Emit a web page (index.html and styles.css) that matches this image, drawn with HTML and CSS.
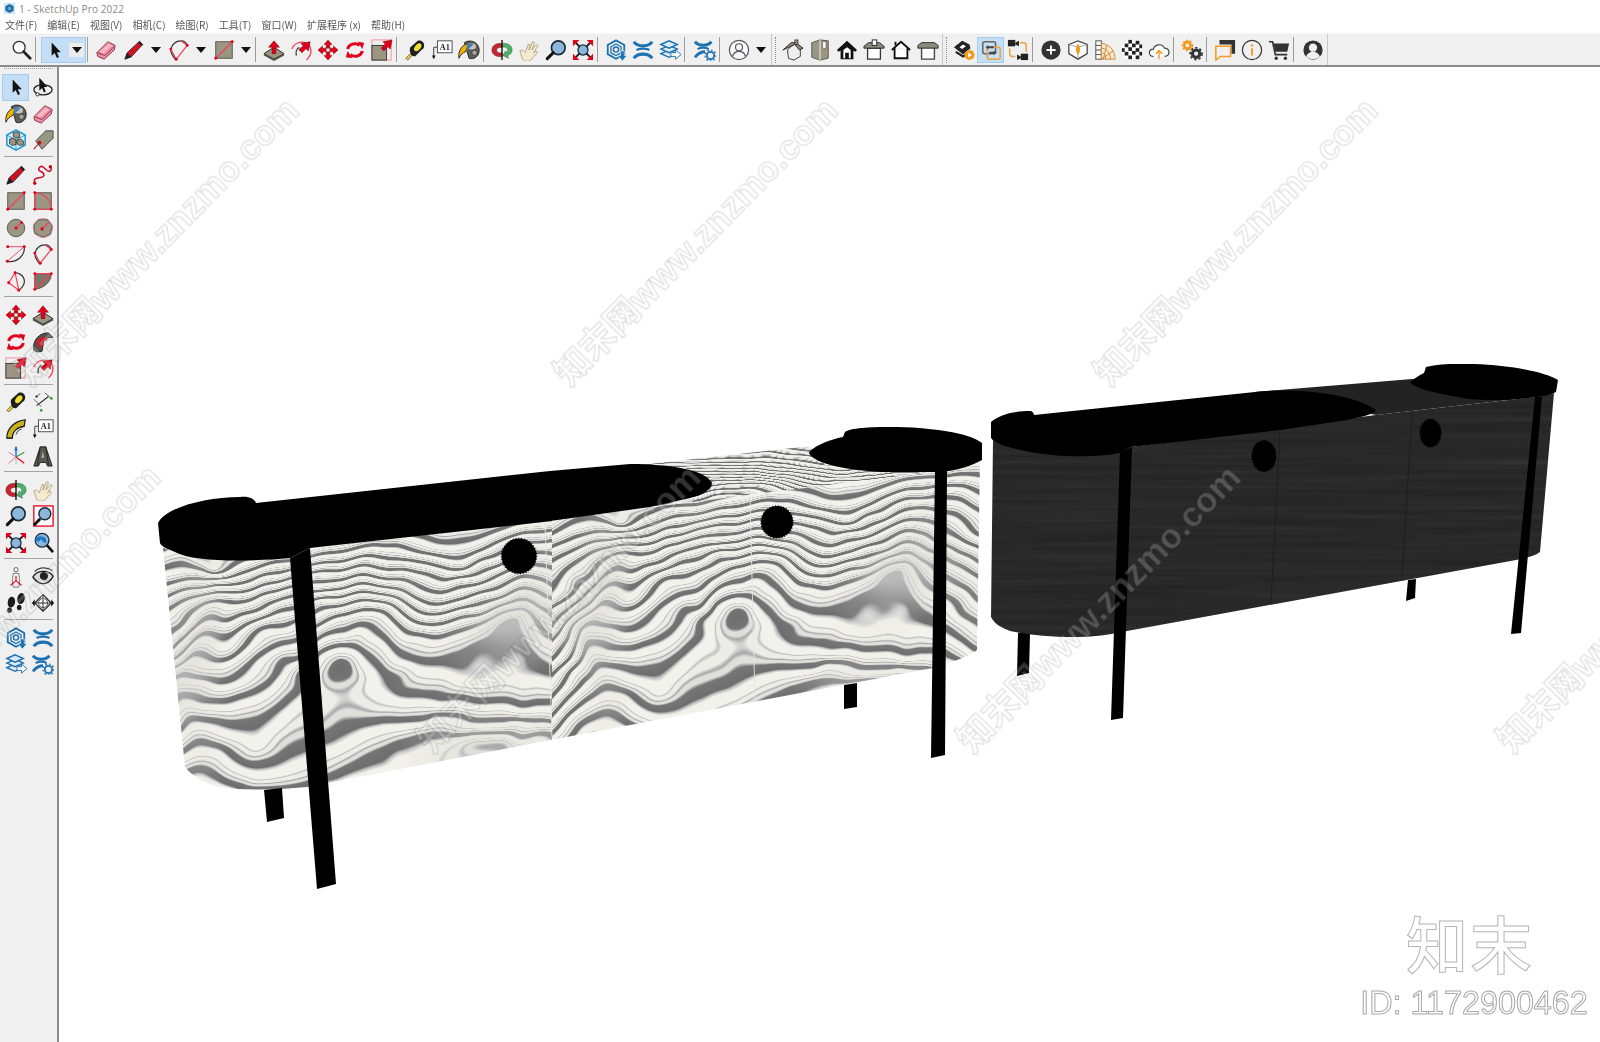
FILE: index.html
```html
<!DOCTYPE html>
<html lang="zh">
<head>
<meta charset="utf-8">
<title>1 - SketchUp Pro 2022</title>
<link rel="stylesheet" href="styles.css">
</head>
<body>
<svg class="defs" width="0" height="0" aria-hidden="true">
<defs>
<symbol id="select" viewBox="0 0 24 24"><path d="M8 3v16l3.600-3.400 2.700 6 2.500-1.100-2.700-5.900H19z" fill="#111"/></symbol>
<symbol id="lasso" viewBox="0 0 24 24"><ellipse cx="12" cy="15" rx="10" ry="5.500" fill="none" stroke="#222" stroke-width="1.400"/><circle cx="6" cy="20" r="1.800" fill="#fff" stroke="#222"/><path d="M8 2v14l3-3 2 5 2-1-2-5h4z" fill="#111"/></symbol>
<symbol id="loupe" viewBox="0 0 24 24"><circle cx="10" cy="9" r="6.500" fill="#fff" stroke="#333" stroke-width="1.400"/><path d="M15 14l7 7" stroke="#222" stroke-width="3" stroke-linecap="round"/></symbol>
<symbol id="eraser" viewBox="0 0 24 24"><path d="M2 15L14 3l8 4-1 5L10 22l-7-3z" fill="#f18ba2" stroke="#7e3645"/><path d="M3 15l8 3L21 8" fill="none" stroke="#7e3645"/><path d="M5 14L15 5l4 2L9 16z" fill="#f9b6c4"/></symbol>
<symbol id="pencil" viewBox="0 0 24 24"><path d="M2 22l2.500-7L18 2.500l3.500 3.500L9 19.500z" fill="#d3121f" stroke="#333"/><path d="M2 22l2.500-7 4.500 4.500z" fill="#222"/><path d="M16.500 4l3.500 3.500 1.500-1.500L18 2.500z" fill="#222"/></symbol>
<symbol id="free" viewBox="0 0 24 24"><path d="M3 20c-3-7 10-3 10-8S5 9 8 4s8 5 11 4 2-4 1-5" fill="none" stroke="#c5162e" stroke-width="1.700"/><circle cx="3" cy="21" r="1.800" fill="#d2001a"/><circle cx="20" cy="3" r="1.800" fill="#d2001a"/></symbol>
<symbol id="rect" viewBox="0 0 24 24"><rect x="3" y="3" width="18" height="18" fill="#9b9682" stroke="#55524a"/><path d="M3 21L21 3" stroke="#f2405a" stroke-width="1.400"/><circle cx="3" cy="21" r="1.600" fill="#e2001a"/><circle cx="21" cy="3" r="1.600" fill="#e2001a"/></symbol>
<symbol id="rrect" viewBox="0 0 24 24"><rect x="3" y="3" width="18" height="18" fill="#9b9682" stroke="#55524a"/><path d="M3 3v18h18C21 11 14 4 3 3z" fill="none" stroke="#f2405a" stroke-width="1.300"/><circle cx="3" cy="3" r="1.600" fill="#e2001a"/><circle cx="3" cy="21" r="1.600" fill="#e2001a"/><circle cx="21" cy="21" r="1.600" fill="#e2001a"/></symbol>
<symbol id="circle" viewBox="0 0 24 24"><circle cx="12" cy="12" r="9.500" fill="#9b9682" stroke="#55524a"/><path d="M12 12l6-6" stroke="#f2405a" stroke-width="1.400"/><circle cx="12" cy="12" r="1.700" fill="#e2001a"/><circle cx="18" cy="6" r="1.400" fill="#e2001a"/></symbol>
<symbol id="poly" viewBox="0 0 24 24"><circle cx="12" cy="12" r="10.500" fill="none" stroke="#f28a9a"/><path d="M7 3h10l5 7-2 9-8 3-9-4-1-9z" fill="#9b9682" stroke="#55524a"/><path d="M11 13l7-7" stroke="#f2405a" stroke-width="1.400"/><circle cx="11" cy="13" r="1.700" fill="#e2001a"/></symbol>
<symbol id="arc2" viewBox="0 0 24 24"><path d="M21 4c1 9-7 18-19 16" fill="none" stroke="#333" stroke-width="1.300"/><path d="M3 4h18L2.500 20" fill="none" stroke="#f2405a"/><circle cx="2.500" cy="20" r="1.600" fill="#e2001a"/><circle cx="21" cy="4" r="1.600" fill="#e2001a"/><circle cx="3" cy="4" r="1.600" fill="#e2001a"/></symbol>
<symbol id="pie" viewBox="0 0 24 24"><path d="M3 11C5 5 9 2 14 2c3 0 6 2 7 5" fill="none" stroke="#333" stroke-width="1.400"/><path d="M3 11c0 5 3 9 6 12" fill="none" stroke="#333" stroke-width="1.400"/><path d="M3 11l6 11L21 7 14 2" fill="none" stroke="#f2405a" stroke-width="1.300"/><circle cx="3" cy="11" r="1.500" fill="#e2001a"/><circle cx="21" cy="7" r="1.600" fill="#e2001a"/><circle cx="9" cy="22" r="1.600" fill="#e2001a"/></symbol>
<symbol id="arc3" viewBox="0 0 24 24"><path d="M11 3C17 3 22 8 21 14c-1 4-3 6-6 8" fill="none" stroke="#333" stroke-width="1.300"/><path d="M11 3L4 14l11 8z" fill="none" stroke="#f2405a" stroke-width="1.300"/><circle cx="11" cy="3" r="1.600" fill="#e2001a"/><circle cx="4" cy="14" r="1.600" fill="#e2001a"/><circle cx="15" cy="22" r="1.600" fill="#e2001a"/></symbol>
<symbol id="pie2" viewBox="0 0 24 24"><path d="M3 4h18c0 9-8 16-18 17z" fill="#7a7668" stroke="#55524a"/><path d="M3 4h18L3 21z" fill="none" stroke="#f2405a" stroke-width="1.300"/><circle cx="3" cy="4" r="1.500" fill="#e2001a"/><circle cx="21" cy="4" r="1.500" fill="#e2001a"/><circle cx="3" cy="21" r="1.500" fill="#e2001a"/></symbol>
<symbol id="push" viewBox="0 0 24 24"><path d="M1 16l11-7 11 7-11 6z" fill="#9b9682" stroke="#222"/><path d="M1 16v2l11 6 11-6v-2l-11 6z" fill="#55524a"/><path d="M12 2L6 9h4v7h4V9h4z" fill="#e2001a" stroke="#500" stroke-width=".5"/></symbol>
<symbol id="offset" viewBox="0 0 24 24"><path d="M2 11C5 3 16 1 21 7c3 5 2 11-3 16" fill="none" stroke="#f2405a" stroke-width="1.400"/><path d="M7 18c-1-3 0-7 3-9" fill="none" stroke="#333" stroke-width="1.400"/><path d="M22 3l-2 10-2.500-2.500L13 15l-3.500-3.500 5-4L12 5z" fill="#e2001a" stroke="#500" stroke-width=".5"/></symbol>
<symbol id="move" viewBox="0 0 24 24"><g fill="#e2001a" stroke="#500" stroke-width=".4"><path d="M12 1l4.500 5H14v4h-4V6H7.500z"/><path d="M12 23l4.500-5H14v-4h-4v4H7.500z"/><path d="M1 12l5-4.500V10h4v4H6v2.500z"/><path d="M23 12l-5-4.500V10h-4v4h4v2.500z"/></g></symbol>
<symbol id="rotate" viewBox="0 0 24 24"><g fill="none" stroke="#e2001a" stroke-width="3.200"><path d="M4 11c1-5 8-8 13-4"/><path d="M20 13c-1 5-8 8-13 4"/></g><path d="M15 3l7 1-2 7z" fill="#e2001a"/><path d="M9 21l-7-1 2-7z" fill="#e2001a"/></symbol>
<symbol id="follow" viewBox="0 0 24 24"><path d="M2 21C0 10 8 2 18 2l5 5c-7-1-11 3-11 9l-1 6-5 1z" fill="#55534c" stroke="#222"/><path d="M5 14c0-5 5-8 10-7l2 3-5 1-1 3 2 0-4 5-4-5z" fill="#d9182c"/></symbol>
<symbol id="scale" viewBox="0 0 24 24"><rect x="1" y="1" width="21" height="22" fill="none" stroke="#f28a9a"/><rect x="1" y="7" width="16" height="16" fill="#9b9682" stroke="#333"/><path d="M23 1l-2 10-2.500-2.500L14 13l-3-3 4.500-4.500L13 3z" fill="#e2001a" stroke="#500" stroke-width=".5"/></symbol>
<symbol id="tape" viewBox="0 0 24 24"><path d="M2 21l7-7 2 2-7 7z" fill="#e8d13a" stroke="#333" stroke-width=".7"/><path d="M7 9l8-7c3-1 7 1 7 5 0 2-1 4-3 5l-7 7c-2 0-5-1-5-4-1-2-1-4 0-6z" fill="#1e1e1e"/><ellipse cx="15" cy="9" rx="3" ry="5" transform="rotate(40 15 9)" fill="#efe12f"/></symbol>
<symbol id="dim" viewBox="0 0 24 24"><path d="M5 16L18 6" stroke="#222" stroke-width="1.100"/><path d="M2 9l8 8M14 2l8 7" stroke="#555"/><circle cx="5" cy="6" r="1.300" fill="#333"/><circle cx="21" cy="8" r="1.500" fill="#2e9c3a"/><circle cx="10" cy="21" r="1.500" fill="#2e9c3a"/><path d="M6 5l3-2" stroke="#555"/></symbol>
<symbol id="prot" viewBox="0 0 24 24"><path d="M2 22C2 11 11 3 22 2l-1 7C13 10 8 15 8 22z" fill="#c9b21c" stroke="#222" stroke-width="1.400"/><path d="M2 22l6 0M12 18c1-3 3-5 6-6" fill="none" stroke="#222"/></symbol>
<symbol id="text" viewBox="0 0 24 24"><rect x="7" y="2" width="16" height="13" fill="#fff" stroke="#444"/><text x="15" y="12" class="svg-a1">A1</text><path d="M3 9v11" stroke="#333"/><path d="M1 18h4l-2 4z" fill="#111"/><path d="M3 9h4" stroke="#333"/></symbol>
<symbol id="axes" viewBox="0 0 24 24"><path d="M12 13V2" stroke="#1c6fd0" stroke-width="1.500"/><path d="M12 1l-2 5h4z" fill="#1c6fd0"/><path d="M12 13l9-5" stroke="#2e9c3a" stroke-width="1.300"/><path d="M12 13l9 7" stroke="#e2001a" stroke-width="1.300"/><path d="M12 13l-8-5M12 13l-8 7" stroke="#d68" stroke-width="1"/><path d="M12 13v8" stroke="#9ac" stroke-width="1"/></symbol>
<symbol id="a3d" viewBox="0 0 24 24"><path d="M2 23L9 2h6l7 21-5 0-2-4H9l-2 4z" fill="#5b5950" stroke="#1e1e1e"/><path d="M10 14h3.500l-1.500-7z" fill="#aaa79a"/><path d="M9 2l-3 20M15 2l3 20" stroke="#222"/></symbol>
<symbol id="orbit" viewBox="0 0 24 24"><path d="M12 5C6 4 1 7 1 12s5 8 11 7v-4c-4 1-6-1-6-3s2-3 6-3z" fill="#c92232" stroke="#621" stroke-width=".6"/><path d="M12 5c6-1 11 2 11 7 0 3-2 5-5 6l1 3-6-3 3-5 1 2c1-1 2-2 1-4-1-2-3-3-6-2z" fill="#4fb06a" stroke="#263" stroke-width=".6"/><path d="M12 1v22" stroke="#111" stroke-width="1.500"/></symbol>
<symbol id="pan" viewBox="0 0 24 24"><path d="M2 13l3-1 3 3 3-9 2 0-1 6 4-9 2 1-3 8 5-6 2 1-5 8 3-2 1 2-6 7c-3 3-8 3-10 0z" fill="#f4ead0" stroke="#a3946f" stroke-width=".8"/></symbol>
<symbol id="zoom" viewBox="0 0 24 24"><circle cx="14.500" cy="9.500" r="7.500" fill="#8cb6dc" stroke="#1c2b3a" stroke-width="1.800"/><path d="M9 15l-6.500 6.500" stroke="#111" stroke-width="3.400" stroke-linecap="round"/></symbol>
<symbol id="zwin" viewBox="0 0 24 24"><rect x="2" y="1" width="21" height="22" fill="#fff" stroke="#e2001a" stroke-width="1.400"/><circle cx="14" cy="9.500" r="6.500" fill="#8cb6dc" stroke="#1c2b3a" stroke-width="1.600"/><path d="M9 15l-7 7" stroke="#111" stroke-width="3.200"/></symbol>
<symbol id="extents" viewBox="0 0 24 24"><path d="M3 3l18 18M21 3L3 21" stroke="#222" stroke-width="2"/><circle cx="12" cy="12" r="5.500" fill="#8cb6dc" stroke="#1c2b3a" stroke-width="1.400"/><g fill="#e2001a"><path d="M1 1h7L1 8z"/><path d="M23 1h-7l7 7z"/><path d="M1 23h7l-7-7z"/><path d="M23 23h-7l7-7z"/></g></symbol>
<symbol id="prev" viewBox="0 0 24 24"><circle cx="11" cy="9" r="7.500" fill="#8cb6dc" stroke="#1c2b3a" stroke-width="1.500"/><path d="M16 14l7 8" stroke="#111" stroke-width="3"/><path d="M3 10c1-6 8-7 12-3l1 5-4-1-2-3-2 2z" fill="#1c78c8"/></symbol>
<symbol id="walk" viewBox="0 0 24 24"><circle cx="12" cy="4" r="2.300" fill="#fff" stroke="#555"/><path d="M9 8h6l1 8-1 7h-6l-1-7z" fill="#eee" stroke="#777"/><path d="M6 21l6-5 6 5M12 16v-5" fill="none" stroke="#e2001a" stroke-width="1.200"/></symbol>
<symbol id="eye" viewBox="0 0 24 24"><path d="M1 12C5 5 17 3 23 11c-3 6-8 9-13 8-4-1-7-4-9-7z" fill="#ddd" stroke="#222" stroke-width="1.500"/><circle cx="13" cy="11" r="4.500" fill="#222"/><path d="M3 6C8 1 17 1 22 5" fill="none" stroke="#444" stroke-width="1.400"/></symbol>
<symbol id="feet" viewBox="0 0 24 24"><g fill="#1a1a1a"><ellipse cx="7" cy="11" rx="4" ry="6" transform="rotate(10 7 11)"/><ellipse cx="5" cy="20" rx="2.500" ry="3"/><ellipse cx="17.500" cy="7" rx="4" ry="6" transform="rotate(10 17 7)"/><ellipse cx="15.500" cy="17" rx="2.500" ry="3"/></g></symbol>
<symbol id="section" viewBox="0 0 24 24"><path d="M12 3l9 9-9 9-9-9z" fill="none" stroke="#222" stroke-width="1.300"/><circle cx="12" cy="12" r="5" fill="#fff" stroke="#444"/><path d="M1 12h22M12 3v18" stroke="#222"/><path d="M21 8l3 4-3 4zM3 8l-3 4 3 4z" fill="#111"/></symbol>
<symbol id="paint" viewBox="0 0 24 24"><path d="M7 4c6-4 15-1 16 7s-6 12-11 10z" fill="#5f5e54" stroke="#222"/><ellipse cx="15" cy="8" rx="4.500" ry="3.500" fill="#c8c6bb"/><circle cx="18" cy="15" r="2.800" fill="#a9a79c" stroke="#222" stroke-width=".6"/><path d="M1 21c-1-8 3-14 9-16 1 3 0 6-2 9-3 1-5 3-7 7z" fill="#f0b400" stroke="#222"/><path d="M10 5c4-1 6 0 7 1l-8 7z" fill="#4b7fb8"/></symbol>
<symbol id="comp" viewBox="0 0 24 24"><path d="M12 1l10 5.500v11L12 23 2 17.500v-11z" fill="#dfeef7" stroke="#1c9ad8" stroke-width="1.700"/><path d="M2 6.500L12 12l10-5.500M12 12v11" fill="none" stroke="#1c9ad8"/><g fill="#9b9682" stroke="#222" stroke-width=".8"><path d="M9 4l4-1 3 2v4l-4 1-3-2z"/><path d="M5 11l4-1 3 2v5l-4 1-3-2z"/><path d="M13 12l4-1 3 2v4l-4 1-3-2z"/></g></symbol>
<symbol id="tag" viewBox="0 0 24 24"><path d="M4 13L15 2h8v8L11 22z" fill="#9b9682" stroke="#444"/><circle cx="8" cy="15" r="1.800" fill="#e2001a" stroke="#600" stroke-width=".4"/><path d="M8 15l-6 7" stroke="#a22" stroke-width="1.200"/></symbol>
<symbol id="hex" viewBox="0 0 24 24"><g fill="none" stroke="#1c71b0"><path d="M12 1.500l9 5v10l-9 5-9-5v-10z" stroke-width="2"/><path d="M12 5.500l5.500 3v6.500L12 18l-5.500-3V8.500z" stroke-width="1.400"/><circle cx="12" cy="11.500" r="2.800" stroke-width="1.600"/></g><path d="M17 13h4v5h3l-5 6-5-6h3z" fill="#1c71b0" stroke="#f0f0f0" stroke-width=".7"/></symbol>
<symbol id="xw" viewBox="0 0 24 24"><g fill="none" stroke="#1c71b0" stroke-width="3.400"><path d="M2 3c4 6 16 6 20 0"/><path d="M2 21c4-6 16-6 20 0"/><path d="M5 12c3-2 11-2 14 0" stroke-width="2.600"/></g></symbol>
<symbol id="stack" viewBox="0 0 24 24"><g fill="#dceaf5" stroke="#1c71b0" stroke-width="1.500"><path d="M2 16l9-4 9 4-9 4z"/><path d="M2 11l9-4 9 4-9 4z"/><path d="M2 6l9-4 9 4-9 4z"/></g><path d="M13 15h5v-3l6 5-6 5v-3h-5z" fill="#fff" stroke="#1c71b0"/></symbol>
<symbol id="xgear" viewBox="0 0 24 24"><g fill="none" stroke="#1c71b0" stroke-width="3.200"><path d="M1 3c4 5 14 5 18 0"/><path d="M1 20c4-5 9-6 11-6"/><path d="M4 11c3-2 9-2 12 0" stroke-width="2.400"/></g><circle cx="18" cy="18" r="4" fill="#f0f0f0" stroke="#1c71b0" stroke-width="2"/><circle cx="18" cy="18" r="6" fill="none" stroke="#1c71b0" stroke-width="1.300" stroke-dasharray="2 2"/></symbol>
<symbol id="profile" viewBox="0 0 24 24"><circle cx="12" cy="12" r="10.500" fill="#f8f8f8" stroke="#55555f" stroke-width="1.300"/><circle cx="12" cy="9" r="3.800" fill="none" stroke="#55555f" stroke-width="1.300"/><path d="M5 19c1-4 4-5.500 7-5.500s6 1.500 7 5.500" fill="none" stroke="#55555f" stroke-width="1.300"/></symbol>
<symbol id="iso" viewBox="0 0 24 24"><path d="M6 12l1 9 6 2 7-4V10L14 4z" fill="#efefef" stroke="#333"/><path d="M1 12L10 4l5 0 8 6-4 2-5-6z" fill="#8d8a7b" stroke="#222"/><rect x="14" y="1" width="3.500" height="5" fill="#8d8a7b" stroke="#222" stroke-width=".7"/></symbol>
<symbol id="door" viewBox="0 0 24 24"><path d="M3 4l9-3 9 1v19l-9 2-9-3z" fill="#9b9682" stroke="#555"/><path d="M12 1v22" stroke="#f4f4f4"/><rect x="15" y="3" width="3.500" height="7" fill="#fff" stroke="#555" stroke-width=".6"/></symbol>
<symbol id="homeb" viewBox="0 0 24 24"><path d="M1 12L12 2l11 10-2 2-2-1.500V22H5V12.500L3 14z" fill="#111"/><path d="M8 21v-9l4-3 4 3v9h-2v-6h-4v6z" fill="#fff"/></symbol>
<symbol id="top" viewBox="0 0 24 24"><path d="M5 10h14v12H5z" fill="#fff" stroke="#333" stroke-width="1.400"/><path d="M1 10V8l5-4h12l5 4v2z" fill="#8d8a7b" stroke="#222"/><rect x="10" y="1" width="5" height="6" fill="#fff" stroke="#222"/></symbol>
<symbol id="outl" viewBox="0 0 24 24"><path d="M2 12L12 3l10 9M5 10v11h14V10" fill="#fff" stroke="#111" stroke-width="2"/><path d="M6 3v4" stroke="#111" stroke-width="2"/></symbol>
<symbol id="box" viewBox="0 0 24 24"><path d="M5 9h14v13H5z" fill="#fff" stroke="#444" stroke-width="1.500"/><path d="M1 10V7l4-3h14l4 3v3z" fill="#8d8a7b" stroke="#222"/></symbol>
<symbol id="lo" viewBox="0 0 24 24"><path d="M1 9l9-7 8 4 1 4-8 7z" fill="#222"/><path d="M3 14l8 5 3-2" fill="none" stroke="#222" stroke-width="2.400"/><path d="M7 9l4-3 3 2-4 3z" fill="#fff"/><circle cx="18" cy="17.500" r="5.500" fill="#f39a1e"/><path d="M16.500 14.500l4 3-4 3z" fill="#fff"/></symbol>
<symbol id="swap" viewBox="0 0 24 24"><rect x="3" y="3" width="14" height="13" rx="2" fill="none" stroke="#666" stroke-width="1.700"/><rect x="8" y="9" width="14" height="13" rx="2" fill="none" stroke="#f0a040" stroke-width="1.700"/><path d="M6 9l3-2.500v1.500h6v2H9v1.500zM18 15l-3-2.500V14H10v2h5v1.500z" fill="#444"/></symbol>
<symbol id="cams" viewBox="0 0 24 24"><rect x="1" y="1" width="8" height="7" fill="#222"/><path d="M9 4l4-2v6l-4-2z" fill="#222"/><rect x="15" y="16" width="8" height="7" fill="#222"/><path d="M15 19l-4-2v6l4-2z" fill="#222"/><path d="M14 4h4c2 0 3 1 3 3v7M3 10v6c0 2 1 3 3 3h3" fill="none" stroke="#f0a040" stroke-width="1.600"/></symbol>
<symbol id="plus" viewBox="0 0 24 24"><circle cx="12" cy="12" r="10.500" fill="#333"/><path d="M12 7v10M7 12h10" stroke="#fff" stroke-width="2"/></symbol>
<symbol id="shield" viewBox="0 0 24 24"><path d="M2 6l10-4 10 4v10l-10 6-10-6z" fill="#fff" stroke="#444" stroke-width="1.400"/><path d="M2 6l10 3 10-3M12 9v13" fill="none" stroke="#888" stroke-width=".8"/><path d="M12 5c3 4 3 9 0 12-3-3-3-8 0-12z" fill="#f39a1e"/></symbol>
<symbol id="colors" viewBox="0 0 24 24"><rect x="2" y="2" width="6" height="20" fill="#fff" stroke="#444"/><path d="M2 7h6M2 12h6M2 17h6" stroke="#444"/><path d="M8 5c8 0 15 7 15 17H8z" fill="#fbe7cf" stroke="#c9862f"/><path d="M8 10c5 0 10 5 10 12M8 15c3 0 5 3 5 7M14 7l-4 15M21 13L8 22" fill="none" stroke="#c9862f"/></symbol>
<symbol id="checker" viewBox="0 0 24 24"><circle cx="12" cy="12" r="11" fill="#fff"/><g fill="#222"><rect x="8" y="1" width="4" height="4"/><rect x="16" y="2" width="4" height="4"/><rect x="4" y="5" width="4" height="4"/><rect x="12" y="5" width="4" height="4"/><rect x="20" y="6" width="3" height="4"/><rect x="1" y="10" width="3" height="4"/><rect x="8" y="9" width="4" height="4"/><rect x="16" y="10" width="4" height="4"/><rect x="4" y="14" width="4" height="4"/><rect x="12" y="13" width="4" height="4"/><rect x="20" y="14" width="3" height="4"/><rect x="8" y="18" width="4" height="4"/><rect x="16" y="18" width="4" height="4"/></g></symbol>
<symbol id="cloud" viewBox="0 0 24 24"><path d="M6 19c-6 0-6-8 0-8 1-5 9-7 12-1 6 0 7 9 0 9" fill="#fff" stroke="#444" stroke-width="1.300"/><path d="M12 22v-9M8.500 16l3.500-3.500 3.500 3.500" fill="none" stroke="#f39a1e" stroke-width="1.500"/></symbol>
<symbol id="gears" viewBox="0 0 24 24"><circle cx="7" cy="7" r="3.500" fill="none" stroke="#f39a1e" stroke-width="3"/><circle cx="7" cy="7" r="5.500" fill="none" stroke="#f39a1e" stroke-width="1.600" stroke-dasharray="2 2"/><circle cx="16.500" cy="16" r="4" fill="none" stroke="#333" stroke-width="3.400"/><circle cx="16.500" cy="16" r="6.500" fill="none" stroke="#333" stroke-width="1.800" stroke-dasharray="2.500 2.300"/></symbol>
<symbol id="chat" viewBox="0 0 24 24"><path d="M6 1h17v15h-4V6H6z" fill="#333"/><path d="M2 8h16v11H7l-5 4z" fill="#f0f0f0" stroke="#f39a1e" stroke-width="1.600"/></symbol>
<symbol id="info" viewBox="0 0 24 24"><circle cx="12" cy="12" r="10.500" fill="none" stroke="#333" stroke-width="1.300"/><path d="M12 10v8" stroke="#f39a1e" stroke-width="2"/><circle cx="12" cy="7" r="1.300" fill="#f39a1e"/></symbol>
<symbol id="cart" viewBox="0 0 24 24"><path d="M1 3h4l3 14h13" fill="none" stroke="#333" stroke-width="1.800"/><path d="M6 5h17l-2 9H8z" fill="#333"/><circle cx="9" cy="21" r="1.800" fill="#333"/><circle cx="19" cy="21" r="1.800" fill="#333"/></symbol>
<symbol id="user" viewBox="0 0 24 24"><circle cx="12" cy="12" r="10.500" fill="#333"/><circle cx="12" cy="9.500" r="4.500" fill="#f0f0f0"/><path d="M4.500 19c2-4 5-5 7.500-5s5.500 1 7.500 5c-2 2-5 3-7.500 3s-5.500-1-7.500-3z" fill="#f0f0f0"/></symbol>
<symbol id="app" viewBox="0 0 24 24"><rect width="24" height="24" fill="#cfe3f3"/><path d="M12 2l9 5v10l-9 5-9-5V7z" fill="#1d6f9f"/><circle cx="12" cy="12" r="4" fill="#5fa8cf"/></symbol>

<filter id="wood" filterUnits="objectBoundingBox" x="0" y="0" width="1" height="1" color-interpolation-filters="sRGB">
<feTurbulence type="fractalNoise" baseFrequency="0.005 0.2" numOctaves="3" seed="7"/>
<feColorMatrix type="matrix" values="1 0 0 0 0 1 0 0 0 0 1 0 0 0 0 0 0 0 0 1"/>
<feComponentTransfer><feFuncR type="table" tableValues=".13 .14 .15 .16 .17 .19 .22"/><feFuncG type="table" tableValues=".13 .14 .15 .16 .17 .19 .22"/><feFuncB type="table" tableValues=".13 .14 .15 .16 .17 .19 .22"/></feComponentTransfer>
<feComposite in2="SourceAlpha" operator="in"/>
</filter>
</defs>
</svg>

<div class="app">
  <div class="titlebar"><svg class="app-icon"><use href="#app"/></svg><span class="title">1 - SketchUp Pro 2022</span></div>
  <nav class="menubar">
    <span class="menu-item">文件(F)</span>
    <span class="menu-item">编辑(E)</span>
    <span class="menu-item">视图(V)</span>
    <span class="menu-item">相机(C)</span>
    <span class="menu-item">绘图(R)</span>
    <span class="menu-item">工具(T)</span>
    <span class="menu-item">窗口(W)</span>
    <span class="menu-item">扩展程序 (x)</span>
    <span class="menu-item">帮助(H)</span>
  </nav>
  <div class="toolbar">
    <span class="btn"><svg class="ic"><use href="#loupe"/></svg></span>
    <i class="sep"></i>
    <span class="split on"><span class="btn"><svg class="ic ic-sm"><use href="#select"/></svg></span><span class="dd dd-box"></span></span>
    <i class="sep"></i>
    <span class="btn"><svg class="ic"><use href="#eraser"/></svg></span>
    <span class="btn btn-after"><svg class="ic"><use href="#pencil"/></svg></span><span class="dd"></span>
    <span class="btn"><svg class="ic"><use href="#pie"/></svg></span><span class="dd"></span>
    <span class="btn"><svg class="ic"><use href="#rect"/></svg></span><span class="dd dd-end"></span>
    <i class="sep"></i>
    <span class="btn"><svg class="ic"><use href="#push"/></svg></span>
    <span class="btn"><svg class="ic"><use href="#offset"/></svg></span>
    <span class="btn"><svg class="ic"><use href="#move"/></svg></span>
    <span class="btn"><svg class="ic"><use href="#rotate"/></svg></span>
    <span class="btn"><svg class="ic"><use href="#scale"/></svg></span>
    <i class="sep"></i>
    <span class="btn"><svg class="ic"><use href="#tape"/></svg></span>
    <span class="btn"><svg class="ic"><use href="#text"/></svg></span>
    <span class="btn"><svg class="ic"><use href="#paint"/></svg></span>
    <i class="sep"></i>
    <span class="btn"><svg class="ic"><use href="#orbit"/></svg></span>
    <span class="btn"><svg class="ic"><use href="#pan"/></svg></span>
    <span class="btn"><svg class="ic"><use href="#zoom"/></svg></span>
    <span class="btn"><svg class="ic"><use href="#extents"/></svg></span>
    <i class="sep"></i>
    <span class="btn"><svg class="ic"><use href="#hex"/></svg></span>
    <span class="btn"><svg class="ic"><use href="#xw"/></svg></span>
    <span class="btn"><svg class="ic"><use href="#stack"/></svg></span>
    <i class="sep"></i>
    <span class="btn btn-after-2"><svg class="ic"><use href="#xgear"/></svg></span>
    <i class="sep"></i>
    <span class="btn btn-after"><svg class="ic"><use href="#profile"/></svg></span><span class="dd"></span>
    <i class="sep sep-bar"></i><i class="grip"></i>
    <span class="btn"><svg class="ic"><use href="#iso"/></svg></span>
    <span class="btn"><svg class="ic"><use href="#door"/></svg></span>
    <span class="btn"><svg class="ic"><use href="#homeb"/></svg></span>
    <span class="btn"><svg class="ic"><use href="#top"/></svg></span>
    <span class="btn"><svg class="ic"><use href="#outl"/></svg></span>
    <span class="btn"><svg class="ic"><use href="#box"/></svg></span>
    <i class="sep sep-bar"></i><i class="grip"></i>
    <span class="btn"><svg class="ic"><use href="#lo"/></svg></span>
    <span class="btn on"><svg class="ic"><use href="#swap"/></svg></span>
    <span class="btn"><svg class="ic"><use href="#cams"/></svg></span>
    <i class="sep"></i>
    <span class="btn"><svg class="ic"><use href="#plus"/></svg></span>
    <span class="btn"><svg class="ic"><use href="#shield"/></svg></span>
    <span class="btn"><svg class="ic"><use href="#colors"/></svg></span>
    <span class="btn"><svg class="ic"><use href="#checker"/></svg></span>
    <span class="btn"><svg class="ic"><use href="#cloud"/></svg></span>
    <i class="sep"></i>
    <span class="btn"><svg class="ic"><use href="#gears"/></svg></span>
    <i class="sep"></i>
    <span class="btn"><svg class="ic"><use href="#chat"/></svg></span>
    <span class="btn"><svg class="ic"><use href="#info"/></svg></span>
    <span class="btn"><svg class="ic"><use href="#cart"/></svg></span>
    <i class="sep"></i>
    <span class="btn btn-after"><svg class="ic"><use href="#user"/></svg></span>
    <i class="sep sep-bar"></i>
  </div>

  <div class="workspace">
    <aside class="rail">
      <div class="rail-grip"></div>
      <div class="rail-group">
        <span class="rbtn on"><svg class="ic ic-sm"><use href="#select"/></svg></span><span class="rbtn"><svg class="ic"><use href="#lasso"/></svg></span>
        <span class="rbtn"><svg class="ic"><use href="#paint"/></svg></span><span class="rbtn"><svg class="ic"><use href="#eraser"/></svg></span>
        <span class="rbtn"><svg class="ic"><use href="#comp"/></svg></span><span class="rbtn"><svg class="ic"><use href="#tag"/></svg></span>
      </div>
      <hr class="rail-sep">
      <div class="rail-group">
        <span class="rbtn"><svg class="ic"><use href="#pencil"/></svg></span><span class="rbtn"><svg class="ic"><use href="#free"/></svg></span>
        <span class="rbtn"><svg class="ic"><use href="#rect"/></svg></span><span class="rbtn"><svg class="ic"><use href="#rrect"/></svg></span>
        <span class="rbtn"><svg class="ic"><use href="#circle"/></svg></span><span class="rbtn"><svg class="ic"><use href="#poly"/></svg></span>
        <span class="rbtn"><svg class="ic"><use href="#arc2"/></svg></span><span class="rbtn"><svg class="ic"><use href="#pie"/></svg></span>
        <span class="rbtn"><svg class="ic"><use href="#arc3"/></svg></span><span class="rbtn"><svg class="ic"><use href="#pie2"/></svg></span>
      </div>
      <hr class="rail-sep">
      <div class="rail-group">
        <span class="rbtn"><svg class="ic"><use href="#move"/></svg></span><span class="rbtn"><svg class="ic"><use href="#push"/></svg></span>
        <span class="rbtn"><svg class="ic"><use href="#rotate"/></svg></span><span class="rbtn"><svg class="ic"><use href="#follow"/></svg></span>
        <span class="rbtn"><svg class="ic"><use href="#scale"/></svg></span><span class="rbtn"><svg class="ic"><use href="#offset"/></svg></span>
      </div>
      <hr class="rail-sep">
      <div class="rail-group">
        <span class="rbtn"><svg class="ic"><use href="#tape"/></svg></span><span class="rbtn"><svg class="ic"><use href="#dim"/></svg></span>
        <span class="rbtn"><svg class="ic"><use href="#prot"/></svg></span><span class="rbtn"><svg class="ic"><use href="#text"/></svg></span>
        <span class="rbtn"><svg class="ic"><use href="#axes"/></svg></span><span class="rbtn"><svg class="ic"><use href="#a3d"/></svg></span>
      </div>
      <hr class="rail-sep">
      <div class="rail-group">
        <span class="rbtn"><svg class="ic"><use href="#orbit"/></svg></span><span class="rbtn"><svg class="ic"><use href="#pan"/></svg></span>
        <span class="rbtn"><svg class="ic"><use href="#zoom"/></svg></span><span class="rbtn"><svg class="ic"><use href="#zwin"/></svg></span>
        <span class="rbtn"><svg class="ic"><use href="#extents"/></svg></span><span class="rbtn"><svg class="ic"><use href="#prev"/></svg></span>
      </div>
      <hr class="rail-sep">
      <div class="rail-group">
        <span class="rbtn"><svg class="ic"><use href="#walk"/></svg></span><span class="rbtn"><svg class="ic"><use href="#eye"/></svg></span>
        <span class="rbtn"><svg class="ic"><use href="#feet"/></svg></span><span class="rbtn"><svg class="ic"><use href="#section"/></svg></span>
      </div>
      <hr class="rail-sep">
      <div class="rail-group">
        <span class="rbtn"><svg class="ic"><use href="#hex"/></svg></span><span class="rbtn"><svg class="ic"><use href="#xw"/></svg></span>
        <span class="rbtn"><svg class="ic"><use href="#stack"/></svg></span><span class="rbtn"><svg class="ic"><use href="#xgear"/></svg></span>
      </div>
    </aside>

    <main class="viewport">
      <canvas class="marble" id="marble" width="1541" height="975"></canvas>
      <svg class="scene" viewBox="59 67 1541 975" role="img" aria-label="两个弧形边柜模型">
        <g class="ink">
          <polygon points="264,790 282,788 284,818 267,822"/>
          <polygon points="844,685 857,683 857,707 844,709"/>
        </g>
        <path class="seam-light" d="M545 521L552 738M750 496L755 702"/>
        <g class="ink">
          <path d="M158 523C165 508 205 497 240 497C248 496 254 498 256 503L550 471L630 464C670 464 706 470 712 483C712 490 702 495 690 498L650 507L543 522L310 548L290 558C247 562 193 562 175 552C165 548 161 546 160 543Z"/>
          <path d="M809 453C812 447 828 440 843 437L845 432C850 428 870 427 890 427C930 427 970 433 982 443L982 460C970 466 960 470 940 472L880 472C850 470 815 465 809 453Z"/>
          <polygon points="290,558 310,548 336,884 317,889"/>
          <polygon points="935,470 947,470 945,755 931,758"/>
          <circle class="knob" cx="519" cy="556" r="17.500"/>
          <circle class="knob" cx="777" cy="522" r="16"/>
        </g>

        <g class="ink">
          <polygon points="1018,633 1030,633 1029,673 1017,676"/>
          <polygon points="1408,580 1416,579 1415,598 1406,601"/>
        </g>
        <path class="dark-top" d="M1255 392L1412 379L1535 397L1376 415Z"/>
        <path class="dark-body" filter="url(#wood)" d="M993 440L991 617C995 625 1003 628 1010 631C1037 637 1087 640 1116 633L1516 560C1530 557 1536 555 1540 552L1554 393L1535 397L1376 415L1131 447L1120 453C1056 457 1014 450 993 440Z"/>
        <path class="seam-dark" d="M1280 430L1271 603M1412 413L1402 577"/>
        <g class="ink">
          <path d="M991 422C998 416 1010 411 1030 411C1032 411 1034 413 1034 415L1255 392C1290 388 1350 392 1376 410C1374 414 1366 416 1347 420L1280 430L1131 447L1120 453C1095 458 1056 457 1030 452C1010 448 995 444 991 438Z"/>
          <path d="M1410 383C1413 379 1420 375 1424 373L1426 367C1440 363 1460 364 1474 364C1510 365 1545 372 1558 380L1556 392C1550 395 1540 397 1535 397C1500 402 1470 400 1458 397C1440 394 1420 390 1410 383Z"/>
          <polygon points="1120,452 1132,447 1123,718 1111,720"/>
          <polygon points="1535,397 1542,397 1521,633 1511,634"/>
          <ellipse class="knob" cx="1264" cy="456" rx="12" ry="15.500"/>
          <ellipse class="knob" cx="1430.500" cy="433" rx="10.500" ry="14"/>
        </g>
      </svg>
    </main>
  </div>

  <div class="marks" aria-hidden="true">
    <span class="wm wm-a1">知末网www.znzmo.com</span>
    <span class="wm wm-a2">知末网www.znzmo.com</span>
    <span class="wm wm-a3">知末网www.znzmo.com</span>
    <span class="wm wm-b1">知末网www.znzmo.com</span>
    <span class="wm wm-b2">知末网www.znzmo.com</span>
    <span class="wm wm-b3">知末网www.znzmo.com</span>
    <span class="wm wm-b4">知末网www.znzmo.com</span>
  </div>
  <div class="brand">
    <div class="brand-name">知末</div>
    <div class="brand-id">ID: 1172900462</div>
  </div>
</div>
<script src="marble.js"></script>
</body>
</html>
```
FILE: styles.css
```css
* { box-sizing: border-box; }
html, body { margin: 0; padding: 0; height: 100%; overflow: hidden; background: #fff; }
body { font-family: "Noto Sans CJK SC", "Noto Sans", sans-serif; }
.defs { position: absolute; }
.app { position: relative; width: 1600px; height: 1042px; display: flex; flex-direction: column; overflow: hidden; }

.titlebar { height: 17px; display: flex; align-items: center; padding-left: 4px; gap: 4px; background: #fff; }
.app-icon { width: 11px; height: 11px; }
.title { font-family: "Open Sans", sans-serif; font-size: 10px; letter-spacing: .12px; color: #8a8a8a; }

.menubar { height: 16px; display: flex; align-items: center; padding-left: 5px; gap: 10px; background: #fff; }
.menu-item { font-size: 10px; line-height: 16px; color: #555; white-space: nowrap; filter: blur(.25px); }

.toolbar { height: 32px; display: flex; align-items: center; padding-left: 7px; background: #f0f0f0; border-top: 1px solid #f7f7f7; }
.btn { flex: none; width: 27px; height: 26px; display: flex; align-items: center; justify-content: center; }
.btn-after { margin-left: 1px; }
.btn-after-2 { margin-left: 2px; }
.ic { width: 22px; height: 22px; display: block; filter: blur(.35px); }
.ic-sm { width: 20px; height: 20px; }
.on { background: #c4dff5; outline: 1px solid #a3cdf0; outline-offset: -1px; }
.split { flex: none; display: flex; align-items: center; width: 45px; height: 26px; margin-left: 1px; }
.split .btn { width: 28px; }
.dd { flex: none; width: 18px; height: 26px; position: relative; }
.dd::after { content: ""; position: absolute; left: 50%; top: 10px; margin-left: -5px; border: 5px solid transparent; border-top: 6px solid #111; border-bottom: 0; }
.dd-end { width: 17px; }
.dd-box { width: 15px; height: 14px; background: #ececec; }
.dd-box::after { top: 4px; }
.sep { flex: none; display: block; width: 1px; height: 25px; margin: 0 4px 0 1px; background: #9b9b9b; }
.sep-bar { height: 32px; margin-right: 3px; background: #c8c8c8; }
.grip { flex: none; display: block; width: 1px; height: 26px; margin-right: 3px; border-left: 1px dotted #8d8d8d; }

.workspace { flex: 1; min-height: 0; display: flex; border-top: 2px solid #8c8c8c; }
.rail { flex: none; width: 59px; padding: 0 2px 0 2px; background: #f0f0f0; border-right: 2px solid #8c8c8c; }
.rail-grip { height: 6px; margin: 1px 2px 0; border-top: 1px dotted #9a9a9a; }
.rail-group { display: grid; grid-template-columns: 27px 27px; grid-auto-rows: 26.6px; }
.rbtn { display: flex; align-items: center; justify-content: center; }
.rail-sep { height: 1px; margin: 2px 2px 4.5px 2px; border: 0; background: #a5a5a5; }

.viewport { flex: 1; position: relative; background: #fff; }
.marble { position: absolute; left: 0; top: 0; width: 1541px; height: 975px; filter: blur(.45px); }
.scene { position: absolute; left: 0; top: 0; width: 1541px; height: 975px; }
.ink { fill: #000; }
.knob { stroke: #000; stroke-width: 1.500; stroke-dasharray: 1 1.800; }
.seam-light { fill: none; stroke: #e6e5de; stroke-width: .9; }
.seam-dark { fill: none; stroke: #1e1e1e; stroke-width: 1; }
.dark-body { fill: #2a2a2a; }
.dark-top { fill: #232323; }
.svg-a1 { font-family: "Liberation Serif", serif; font-size: 9px; font-weight: 700; fill: #222; text-anchor: middle; }

.marks { position: absolute; inset: 0; overflow: hidden; pointer-events: none; }
.wm { position: absolute; height: 35px; font-family: "Liberation Sans", "Noto Sans CJK SC", sans-serif; font-weight: 700; font-size: 35px; line-height: 35px; white-space: nowrap; color: rgba(255, 255, 255, .2); -webkit-text-stroke: 1.500px rgba(0, 0, 0, .11); transform: rotate(-45.500deg); transform-origin: 0 100%; filter: blur(.6px); }
.wm-a1 { left: 34px; top: 356px; }
.wm-a2 { left: 573px; top: 356px; }
.wm-a3 { left: 1113px; top: 356px; }
.wm-b1 { left: -104px; top: 723px; }
.wm-b2 { left: 436px; top: 723px; }
.wm-b3 { left: 976px; top: 723px; }
.wm-b4 { left: 1516px; top: 723px; }

.brand { position: absolute; left: 1360px; top: 900px; width: 228px; display: flex; flex-direction: column; align-items: center; }
.brand-name { margin-left: -8px; font-family: "Noto Sans CJK SC", sans-serif; font-weight: 500; font-size: 62px; line-height: 85px; letter-spacing: 2px; color: #fff; -webkit-text-stroke: 1px #b5b5b5; }
.brand-id { font-family: "Liberation Sans", sans-serif; font-size: 32.300px; line-height: 36px; white-space: nowrap; color: #fff; -webkit-text-stroke: 1px #a8a8a8; }
```
FILE: marble.js
```js
(function () {
  var canvas = document.getElementById("marble");
  var ctx = canvas.getContext("2d");
  // Page coordinates, matching the viewBox of the scene above the canvas.
  ctx.translate(-59, -67);

  function hash(i, j) {
    var s = Math.sin(i * 127.1 + j * 311.7) * 43758.5453;
    return s - Math.floor(s);
  }
  function noise(x, y) {
    var i = Math.floor(x), j = Math.floor(y);
    var a = x - i, b = y - j;
    a = a * a * (3 - 2 * a);
    b = b * b * (3 - 2 * b);
    var top = hash(i, j) + (hash(i + 1, j) - hash(i, j)) * a;
    var bot = hash(i, j + 1) + (hash(i + 1, j + 1) - hash(i, j + 1)) * a;
    return top + (bot - top) * b;
  }
  function fbm(x, y) {
    return (noise(x, y) + 0.4 * noise(2.1 * x + 5, 2.1 * y + 3)) / 1.4;
  }

  // u, v, height, spread u, spread v, paleness
  var whorls = [
    [340, 650, 8, 95, 72, 0],
    [527, 661, 3.5, 48, 42, 0.7],
    [483, 765, 3, 75, 30, 0.6],
    [220, 562, -2.5, 38, 24, 0],
    [190, 650, 3, 34, 100, 0.6],
    [420, 560, -1.2, 100, 30, 0]
  ];

  var stops = [
    [0, 0.95], [0.26, 0.95], [0.3, 0.76], [0.34, 0.93], [0.44, 0.93], [0.49, 0.66],
    [0.53, 0.88], [0.6, 0.88], [0.66, 0.46], [0.88, 0.43], [0.93, 0.74], [1, 0.95]
  ];
  function band(t) {
    for (var i = 1; i < stops.length; i++) {
      if (t <= stops[i][0]) {
        var p = stops[i - 1], q = stops[i];
        return p[1] + (q[1] - p[1]) * (t - p[0]) / (q[0] - p[0]);
      }
    }
    return 0.95;
  }

  function shade(u, v) {
    var a = fbm(u * 0.011 + 3, v * 0.012 + 7) - 0.5;
    var b = fbm(u * 0.011 + 21, v * 0.012 + 13) - 0.5;
    var c = noise(u * 0.05, v * 0.06) - 0.5;
    var d = noise(u * 0.05 + 9, v * 0.06 + 5) - 0.5;
    var U = u + 70 * a + 7 * c;
    var V = v + 48 * b + 5 * d;
    var F = 0.048 * V + 1.5 * noise(u * 0.006, v * 0.008);
    var pale = 0;
    for (var k = 0; k < whorls.length; k++) {
      var w = whorls[k];
      var dx = (U - w[0]) / w[3], dy = (V - w[1]) / w[4];
      var r2 = dx * dx + dy * dy;
      // Conical rather than bell-shaped, so the rings keep an even spacing up to the middle.
      F += w[2] * Math.exp(-Math.sqrt(r2 + 0.04));
      pale += w[5] * Math.exp(-r2);
    }
    var t = F - Math.floor(F);
    var g = band(t);
    var contrast = (0.85 + 0.5 * noise(u * 0.02, v * 0.02)) * (1 - Math.min(pale, 0.65));
    if (contrast > 1) contrast = 1;
    return 0.86 + (g - 0.86) * contrast;
  }

  function paint(x0, y0, w, h, clip, map) {
    var off = document.createElement("canvas");
    off.width = w;
    off.height = h;
    var octx = off.getContext("2d");
    var img = octx.createImageData(w, h);
    var px = img.data, n = 0;
    for (var y = 0; y < h; y++) {
      for (var x = 0; x < w; x++) {
        var uv = map(x0 + x, y0 + y);
        var g = shade(uv[0], uv[1]);
        px[n++] = 255 * g;
        px[n++] = 255 * g;
        px[n++] = 255 * (g > 0.85 ? g - 0.025 : g);
        px[n++] = 255;
      }
    }
    octx.putImageData(img, 0, 0);
    ctx.save();
    ctx.clip(new Path2D(clip));
    ctx.drawImage(off, x0, y0);
    ctx.restore();
  }

  // The texture tile repeats: the doors to the right show it again, a little smaller.
  function front(x, y) {
    if (x < 552) return [x, y + 0.15 * (x - 340)];
    return [340 + (x - 737) * 1.08, 650 + (y + 0.15 * (x - 737) - 600) * 1.05];
  }
  function topFace(x, y) {
    return [250 + (x - 650) * 1.1, 500 + (y - 445) * 3];
  }

  paint(640, 440, 300, 75, "M640 465L810 446L825 465L933 472L653 507L690 490Z", topFace);
  paint(155, 455, 830, 345,
    "M163 548L185 767Q193 778 217 787Q253 792 307 787L540 742L933 668Q967 658 977 650L980 460L933 472L653 507L310 548L290 558Q240 562 193 557Z",
    front);
})();
```
